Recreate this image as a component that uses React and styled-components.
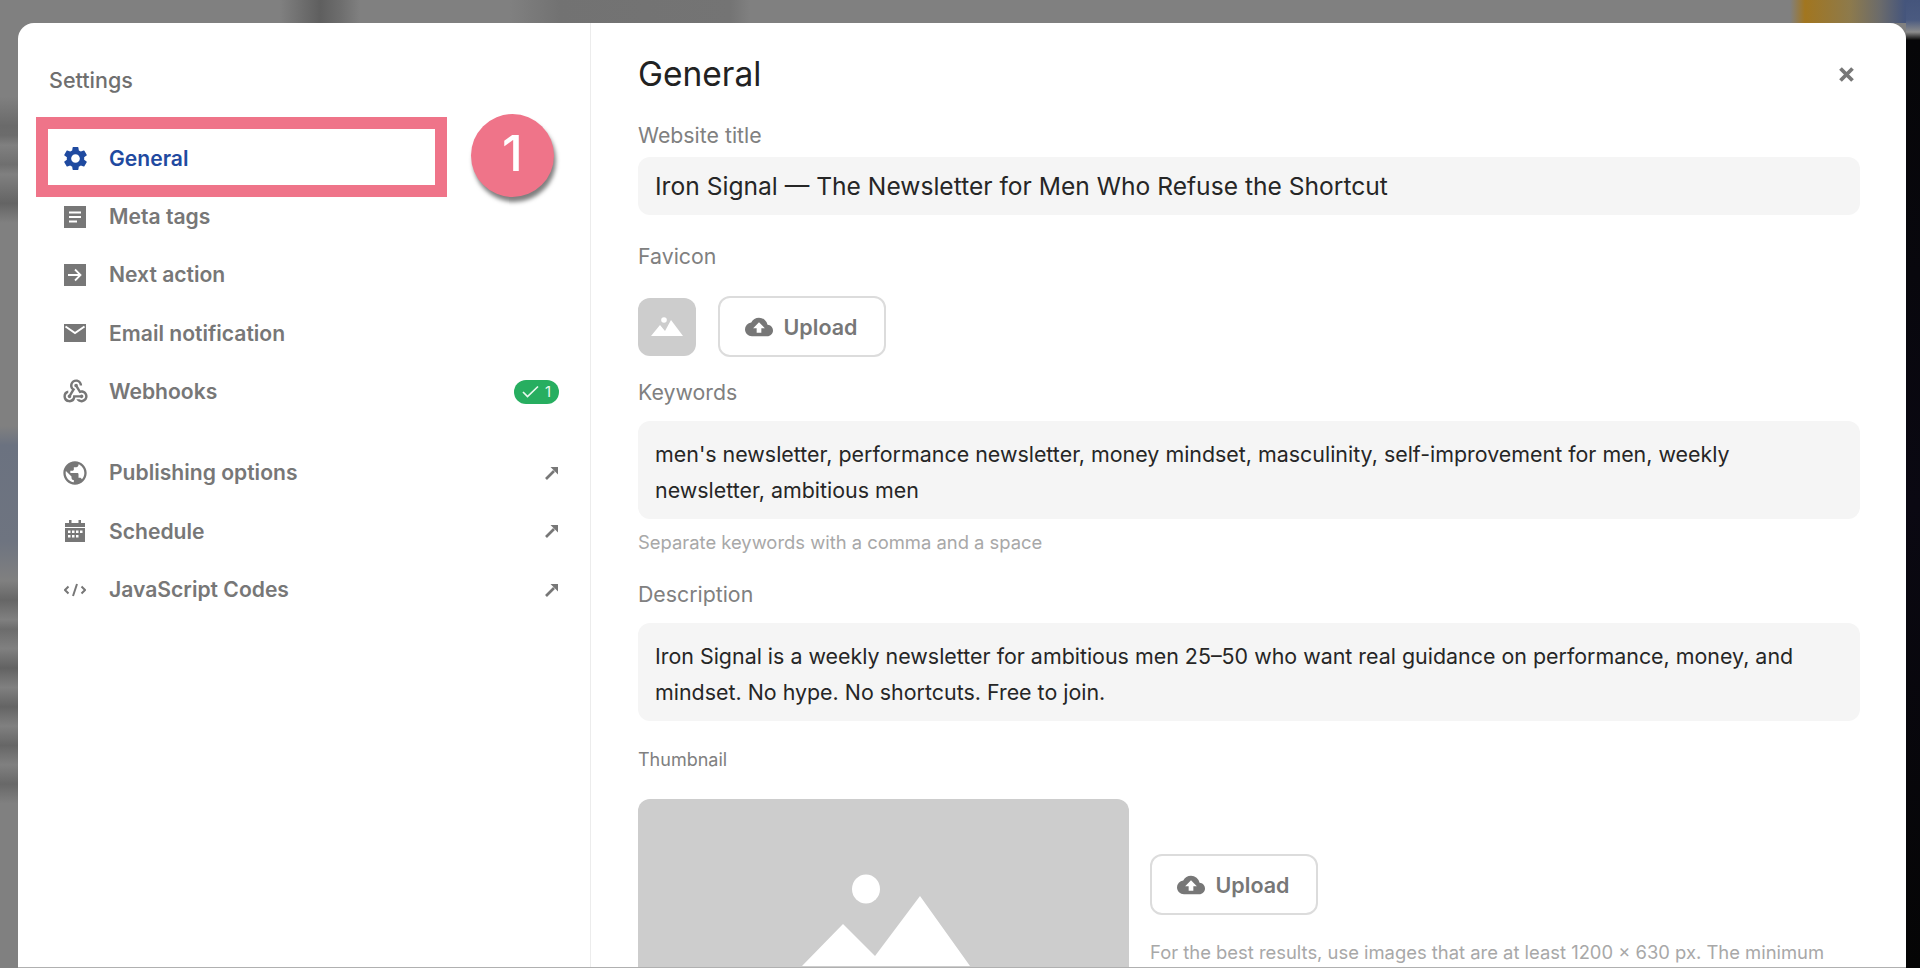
import React from 'react';
import styled, { createGlobalStyle } from 'styled-components';
import { MdSettings, MdOutlineWebhook, MdPublic, MdCloudUpload } from 'react-icons/md';

const GlobalStyle = createGlobalStyle`
  html, body { margin: 0; padding: 0; height: 968px; overflow: hidden; background: #808080; }
  * { box-sizing: border-box; }
  body { font-family: Inter, "Noto Sans", sans-serif; }
`;

// the blurred page behind the dialog: top strip, left strip, right strip, hairline at the bottom
const Backdrop = styled.div`
  width: 1920px;
  height: 968px;
  padding: 23px 14px 1px 18px;
  background-color: #808080;
  background-repeat: no-repeat;
  background-image:
    linear-gradient(#060608, #0a0812 50%, #050505),
    linear-gradient(#45557c, #4a5a80 50%, #8c8c8c 80%, #0a0a0a),
    linear-gradient(90deg, transparent 280px, #5f5f5f 320px, #6d6d6d 340px, transparent 360px, transparent 510px, #727272 560px, #747474 730px, transparent 750px, transparent 1790px, #a2761f 1805px, #8d7a4c 1850px, #6b6b6b 1880px, #45557c 1905px),
    linear-gradient(#808080 10%, #6a6a6a 13%, #6c6c6c 14%, #808080 15%, #6f6f6f 17%, #808080 18%, #646464 21%, #808080 23%, #808080 44%, #6b7280 46%, #6e7480 56%, #808080 60%, #666 62%, #808080 64%, #6c6c6c 65%, #808080 67%, #626262 69%, #808080 71%, #646464 73%, #808080 75%, #666 77%, #808080 79%, #686868 81%, #808080 83%),
    linear-gradient(#b0b0b0, #b0b0b0);
  background-size: 14px 928px, 14px 40px, 100% 23px, 18px 100%, 100% 1px;
  background-position: right top 40px, right top, left top, left top, left bottom;
`;

const Modal = styled.div`
  position: relative;
  display: flex;
  height: 944px;
  background: #fff;
  border-radius: 16px 16px 0 0;
  overflow: hidden;
`;

const Sidebar = styled.aside`
  flex: none;
  width: 573px;
  padding: 43px 31px 0 30px;
  border-right: 1px solid #ececec;
`;

const SidebarTitle = styled.div`
  height: 28px;
  margin: 0 0 35px 1px;
  font-size: 21.5px;
  font-weight: 500;
  line-height: 28px;
  color: #6f6f6f;
`;

const Row = styled.div`
  display: flex;
  align-items: center;
  gap: 23px;
  height: 58.35px;
  padding-left: 16px;
  margin-top: ${p => (p.$spaced ? '23px' : '0')};
  font-size: 21.1px;
  font-weight: 600;
  color: ${p => (p.$active ? '#1f4aa0' : '#777')};
`;

const RowIcon = styled.span`
  flex: none;
  display: flex;
  align-items: center;
  justify-content: center;
  width: 22px;
  height: 24px;
  color: inherit;

  svg {
    flex: none;
  }
`;

const RowLabel = styled.span`
  flex: 1;
`;

const Badge = styled.span`
  display: flex;
  align-items: center;
  justify-content: center;
  gap: 6px;
  width: 45px;
  height: 24px;
  border-radius: 12px;
  background: #27ae60;
  color: #e8f8ee;
  font-size: 15px;
  font-weight: 400;
`;

const Highlight = styled.div`
  position: absolute;
  left: 18px;
  top: 94px;
  width: 411px;
  height: 80px;
  border: 12px solid #ef7489;
  pointer-events: none;
`;

const StepDot = styled.div`
  position: absolute;
  left: 453px;
  top: 91px;
  width: 83px;
  height: 83px;
  display: flex;
  align-items: center;
  justify-content: center;
  padding-bottom: 5px;
  border-radius: 50%;
  background: #ef7489;
  box-shadow: 2px 5px 4px rgba(0, 0, 0, 0.5);
  color: #fff;
  font-family: Inter, "Liberation Sans", sans-serif;
  font-size: 50px;
  font-weight: 500;
  line-height: 1;
`;

const Main = styled.main`
  flex: 1;
  min-width: 0;
  padding: 29px 46px 0 47px;
`;

const Header = styled.div`
  display: flex;
  align-items: center;
  justify-content: space-between;
  height: 44px;
  padding-right: 6px;
`;

const Title = styled.h1`
  margin: 0;
  font-size: 33.5px;
  font-weight: 400;
  color: #222;
`;

const Label = styled.div`
  margin-top: ${p => p.$top}px;
  margin-bottom: ${p => p.$bottom}px;
  font-size: ${p => (p.$small ? '18px' : '21.3px')};
  line-height: 26px;
  color: #808080;
`;

const Field = styled.div`
  padding: ${p => (p.$single ? '0 17px' : '15px 17px 11px')};
  height: ${p => (p.$single ? '58px' : '98px')};
  line-height: ${p => (p.$single ? '58px' : '36px')};
  background: #f5f5f5;
  border-radius: 12px;
  font-size: ${p => (p.$single ? '24.6px' : '21.42px')};
  color: #262626;
`;

const Hint = styled.div`
  margin-top: ${p => p.$top || 0}px;
  font-size: 18.4px;
  line-height: 26px;
  color: #a8a8a8;
`;

const FaviconRow = styled.div`
  display: flex;
  align-items: center;
  gap: 22px;
`;

const FaviconBox = styled.div`
  display: flex;
  align-items: center;
  justify-content: center;
  width: 58px;
  height: 58px;
  border-radius: 12px;
  background: #cdcdcd;
`;

const UploadButton = styled.button`
  display: flex;
  align-items: center;
  justify-content: center;
  gap: 11px;
  width: 168px;
  height: 61px;
  padding: 0 2px 0 0;
  background: #fff;
  border: 2px solid #dcdcdc;
  border-radius: 12px;
  font-family: inherit;
  font-size: 21.5px;
  font-weight: 600;
  color: #777;
`;

const ThumbRow = styled.div`
  display: flex;
  gap: 21px;
`;

const ThumbBox = styled.div`
  flex: none;
  width: 491px;
  height: 258px;
  border-radius: 12px;
  background: #cdcdcd;
  overflow: hidden;
`;

const ThumbSide = styled.div`
  flex: 1;
  min-width: 0;
  padding-top: 55px;
`;

const NoWrapHint = styled(Hint)`
  white-space: nowrap;
`;

const Glyph = ({ size = 22, children }) => (
  <svg width={size} height={size} viewBox="0 0 22 22" fill="none">{children}</svg>
);

const MetaIcon = () => (
  <Glyph>
    <rect width="22" height="22" fill="currentColor" />
    <path d="M5 6.5h12M5 11h12M5 15.5h8" stroke="#fff" strokeWidth="2" />
  </Glyph>
);

const NextIcon = () => (
  <Glyph>
    <rect width="22" height="22" fill="currentColor" />
    <path d="M4 11h12M11 5.5 16.5 11 11 16.5" stroke="#fff" strokeWidth="1.8" />
  </Glyph>
);

const MailIcon = () => (
  <Glyph>
    <rect y="2" width="22" height="18" fill="currentColor" />
    <path d="M1.5 4.5 11 11l9.500-6.500" stroke="#fff" strokeWidth="2" />
  </Glyph>
);

const CalendarIcon = () => (
  <Glyph>
    <path d="M5 0h2.500v3H14.500V0H17v3h4v19H1V3h4z" fill="currentColor" />
    <rect x="1" y="7" width="20" height="1" fill="#fff" />
    <path d="M4 10.500h2.500V13H4zM8 10.500h2.500V13H8zM12 10.500h2.500V13H12zM16 10.500h2.500V13H16zM4 15h2.500v2.500H4zM8 15h2.500v2.500H8zM12 15h2.500v2.500H12z" fill="#fff" />
  </Glyph>
);

const CodeIcon = () => (
  <Glyph>
    <path d="M4.500 7.500 1 11l3.500 3.500M17.500 7.500 21 11l-3.500 3.500M13 5 9 17" stroke="currentColor" strokeWidth="2" />
  </Glyph>
);

const ExternalIcon = () => (
  <svg width="14" height="14" viewBox="0 0 14 14">
    <path d="M1 13 9 5" stroke="#777" strokeWidth="2.600" />
    <path d="M5.500 1H13v7.500z" fill="#777" />
  </svg>
);

const CloseIcon = () => (
  <svg width="15" height="15" viewBox="0 0 15 15">
    <path d="M1.500 1.500l12 12M13.500 1.500l-12 12" stroke="#777" strokeWidth="3.800" />
  </svg>
);

const CheckIcon = () => (
  <svg width="17" height="13" viewBox="0 0 17 13" fill="none">
    <path d="M1 7l4.500 4.500L16 1.500" stroke="#e8f8ee" strokeWidth="1.700" />
  </svg>
);

const SmallPicture = () => (
  <svg width="32" height="24" viewBox="0 0 32 24" fill="#fff">
    <circle cx="13" cy="5" r="2.800" />
    <path d="M0 21 9 10l5 6 6-11 12 16z" />
  </svg>
);

const ThumbPicture = () => (
  <svg width="491" height="258" viewBox="0 0 491 258" fill="#fff">
    <ellipse cx="228" cy="90" rx="14" ry="14.500" />
    <path d="M164 167 205 125 237 157 282 97 332 167z" />
  </svg>
);

const menu = [
  { label: 'General', icon: <MdSettings size={29} />, active: true },
  { label: 'Meta tags', icon: <MetaIcon /> },
  { label: 'Next action', icon: <NextIcon /> },
  { label: 'Email notification', icon: <MailIcon /> },
  { label: 'Webhooks', icon: <MdOutlineWebhook size={29} />, badge: 1 },
  { label: 'Publishing options', icon: <MdPublic size={28} />, external: true, spaced: true },
  { label: 'Schedule', icon: <CalendarIcon />, external: true },
  { label: 'JavaScript Codes', icon: <CodeIcon />, external: true },
];

export default function App() {
  return (
    <Backdrop>
      <GlobalStyle />
      <Modal>
        <Sidebar>
          <SidebarTitle>Settings</SidebarTitle>
          {menu.map(item => (
            <Row key={item.label} $active={item.active} $spaced={item.spaced}>
              <RowIcon>{item.icon}</RowIcon>
              <RowLabel>{item.label}</RowLabel>
              {item.badge && <Badge><CheckIcon />{item.badge}</Badge>}
              {item.external && <ExternalIcon />}
            </Row>
          ))}
        </Sidebar>
        <Main>
          <Header>
            <Title>General</Title>
            <CloseIcon />
          </Header>
          <Label $top={26} $bottom={9}>Website title</Label>
          <Field $single>Iron Signal — The Newsletter for Men Who Refuse the Shortcut</Field>
          <Label $top={28} $bottom={27}>Favicon</Label>
          <FaviconRow>
            <FaviconBox><SmallPicture /></FaviconBox>
            <UploadButton><MdCloudUpload size={28} />Upload</UploadButton>
          </FaviconRow>
          <Label $top={22} $bottom={16}>Keywords</Label>
          <Field>men's newsletter, performance newsletter, money mindset, masculinity, self-improvement for men, weekly newsletter, ambitious men</Field>
          <Hint $top={10}>Separate keywords with a comma and a space</Hint>
          <Label $top={26} $bottom={16}>Description</Label>
          <Field>Iron Signal is a weekly newsletter for ambitious men 25–50 who want real guidance on performance, money, and mindset. No hype. No shortcuts. Free to join.</Field>
          <Label $small $top={26} $bottom={26}>Thumbnail</Label>
          <ThumbRow>
            <ThumbBox><ThumbPicture /></ThumbBox>
            <ThumbSide>
              <UploadButton><MdCloudUpload size={28} />Upload</UploadButton>
              <NoWrapHint $top={24}>For the best results, use images that are at least 1200 × 630 px. The minimum</NoWrapHint>
            </ThumbSide>
          </ThumbRow>
        </Main>
        <Highlight />
        <StepDot>1</StepDot>
      </Modal>
    </Backdrop>
  );
}
